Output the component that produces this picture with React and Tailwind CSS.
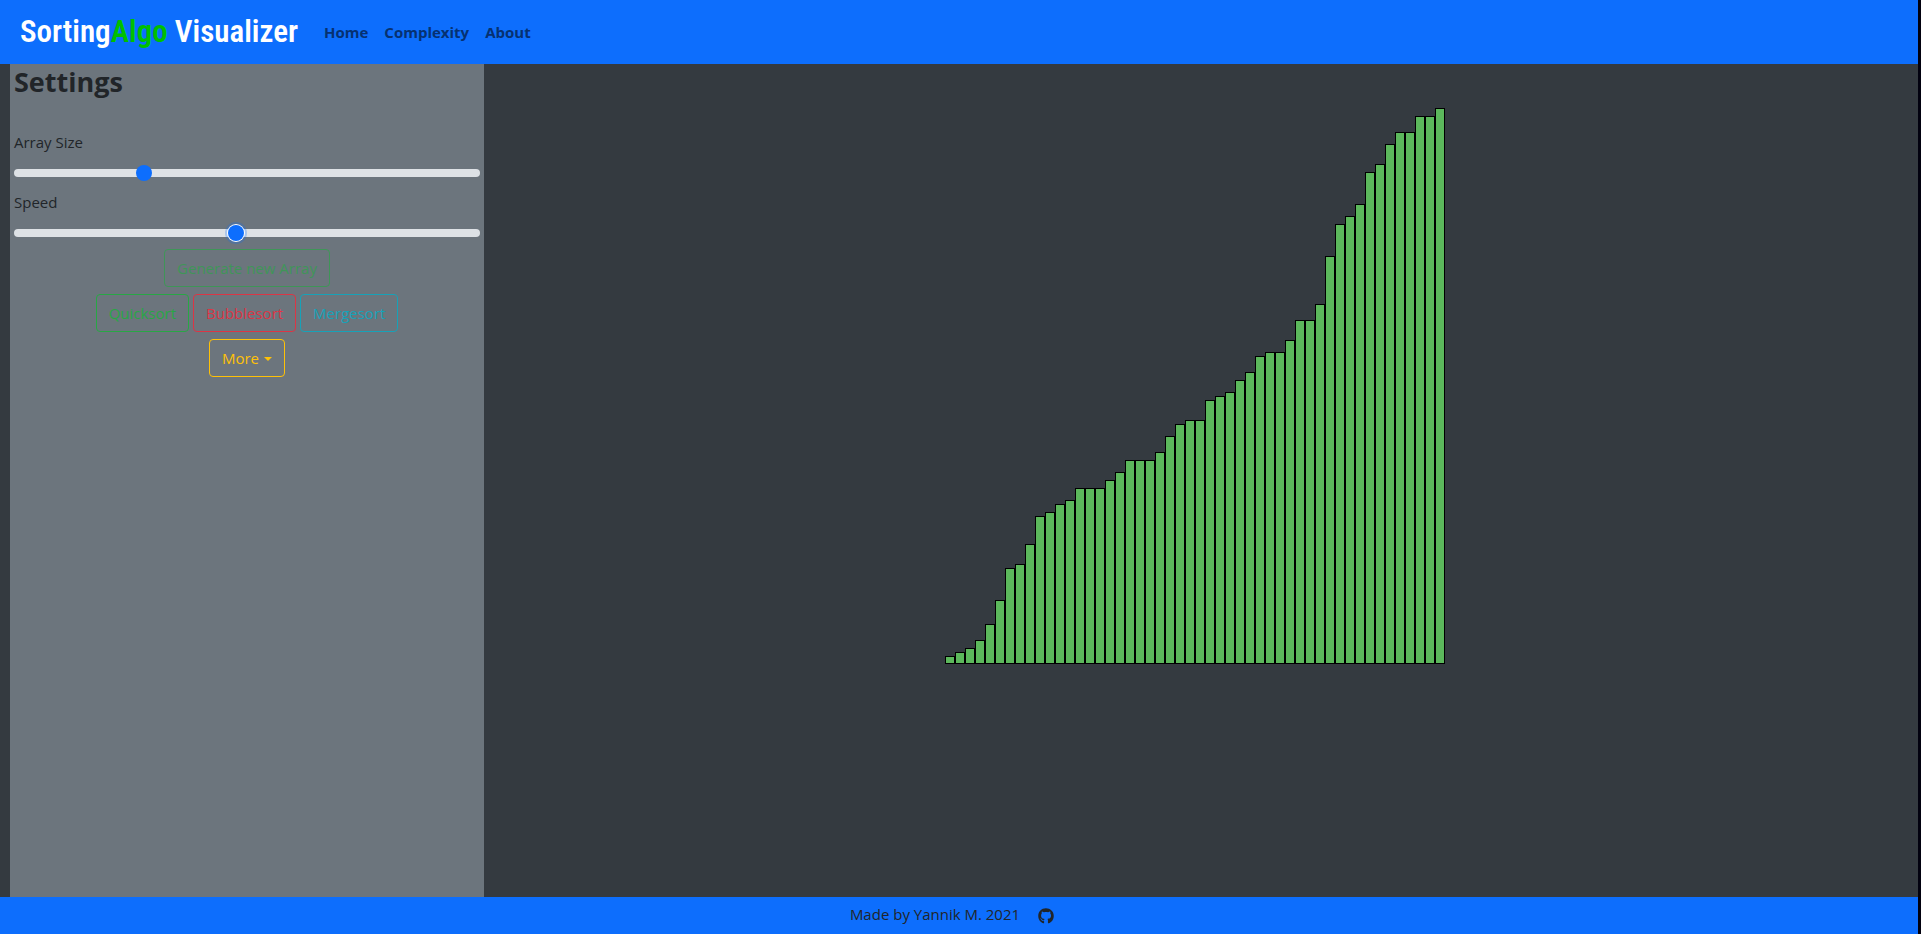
import React, { useState } from "react";
import { FaGithub } from "react-icons/fa";

const BARS = [
  8, 12, 16, 24, 40, 64, 96, 100, 120, 148, 152, 160, 164, 176, 176, 176, 184,
  192, 204, 204, 204, 212, 228, 240, 244, 244, 264, 268, 272, 284, 292, 308,
  312, 312, 324, 344, 344, 360, 408, 440, 448, 460, 492, 500, 520, 532, 532,
  548, 548, 556,
];

const LINKS = ["Home", "Complexity", "About"];

const RANGE =
  "block h-6 w-full appearance-none bg-transparent outline-none " +
  "[&::-webkit-slider-runnable-track]:h-2 [&::-webkit-slider-runnable-track]:rounded-full [&::-webkit-slider-runnable-track]:bg-[#dee2e6] " +
  "[&::-webkit-slider-thumb]:-mt-1 [&::-webkit-slider-thumb]:size-4 [&::-webkit-slider-thumb]:appearance-none [&::-webkit-slider-thumb]:rounded-full [&::-webkit-slider-thumb]:bg-[#0d6efd]";

const RANGE_ACTIVE =
  "[&::-webkit-slider-thumb]:shadow-[0_0_0_1px_#fff,0_0_0_3px_rgba(13,110,253,0.25)]";

const BUTTON = "h-[38px] rounded border px-3 pt-px";

function Slider({ id, label, initial, active }) {
  const [value, setValue] = useState(initial);
  return (
    <div className="mb-1">
      <label htmlFor={id} className="block pt-px pb-[7px] leading-6">
        {label}
      </label>
      <input
        id={id}
        type="range"
        min="0"
        max="200"
        value={value}
        onChange={(e) => setValue(Number(e.target.value))}
        className={active ? `${RANGE} ${RANGE_ACTIVE}` : RANGE}
      />
    </div>
  );
}

export default function App() {
  return (
    <div className="flex min-h-screen flex-col border-r-3 border-[#02010f] bg-[#343a40] font-['Open_Sans','Noto_Sans',sans-serif] text-[15px] text-[#212529]">
      <header className="flex h-16 items-center bg-[#0d6efd] px-5">
        <a
          href="#"
          className="font-['Roboto_Condensed','Liberation_Sans_Narrow',Roboto,sans-serif] text-[31px] leading-10 font-semibold whitespace-nowrap text-white"
        >
          Sorting<span className="text-[#00c000]">Algo</span> Visualizer
        </a>
        <nav className="ml-[26px] flex gap-4 font-bold text-[#063171]">
          {LINKS.map((link) => (
            <a key={link} href={`#${link.toLowerCase()}`}>
              {link}
            </a>
          ))}
        </nav>
      </header>

      <main className="flex grow pr-3 pl-[10px]">
        <aside className="w-1/4 bg-[#6c757d] px-1">
          <h1 className="mb-[29px] text-[27px] leading-9 font-bold">Settings</h1>
          <Slider id="size" label="Array Size" initial={54} />
          <Slider id="speed" label="Speed" initial={95} active />
          <div className="flex flex-col items-center gap-[7px]">
            <button
              type="button"
              disabled
              className={`${BUTTON} border-[#28a745] text-[#28a745] opacity-65`}
            >
              Generate new Array
            </button>
            <div className="flex gap-1">
              <button type="button" className={`${BUTTON} border-[#28a745] text-[#28a745]`}>
                Quicksort
              </button>
              <button type="button" className={`${BUTTON} border-[#dc3545] text-[#dc3545]`}>
                Bubblesort
              </button>
              <button type="button" className={`${BUTTON} border-[#17a2b8] text-[#17a2b8]`}>
                Mergesort
              </button>
            </div>
            <button
              type="button"
              className={`${BUTTON} flex items-center gap-[5px] border-[#ffc107] text-[#ffc107]`}
            >
              More
              <svg viewBox="0 0 8 4" className="h-1 w-2" fill="currentColor" aria-hidden="true">
                <path d="M0 0h8L4 4z" />
              </svg>
            </button>
          </div>
        </aside>

        <section className="flex grow items-start justify-center pt-11">
          <div className="flex items-end">
            {BARS.map((height, i) => (
              <div
                key={i}
                className="w-[10px] border border-black bg-[#5cb85c]"
                style={{ height }}
              />
            ))}
          </div>
        </section>
      </main>

      <footer className="flex h-[37px] items-center justify-center gap-[18px] bg-[#0d6efd] pr-[14px]">
        <span className="pb-0.5">Made by Yannik M. 2021</span>
        <a href="#github" aria-label="GitHub">
          <FaGithub className="size-4" />
        </a>
      </footer>
    </div>
  );
}
